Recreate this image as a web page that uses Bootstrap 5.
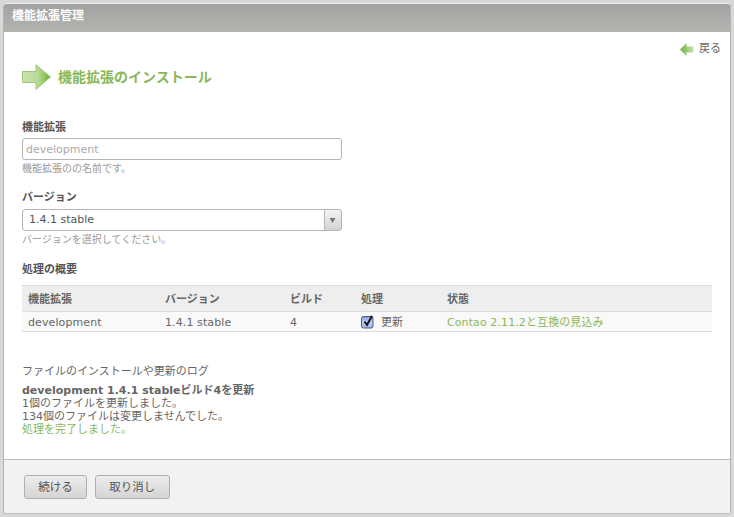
<!DOCTYPE html>
<html lang="ja"><head><meta charset="utf-8"><title>機能拡張管理</title>
<link href="https://cdn.jsdelivr.net/npm/bootstrap@5.3.0/dist/css/bootstrap.min.css" rel="stylesheet">
<style>
html,body{height:517px;overflow:hidden}
body{background:#d8d8d8;font:11px/13px "DejaVu Sans","Noto Sans CJK JP",sans-serif;color:#666;padding:4px 4px 4px 4px}
.xpanel{height:509px;border:0;border-radius:3px 3px 0 0;background:#fff;box-shadow:-1px 0 0 #b5b5b5,1px 0 0 #b5b5b5,0 -1px 0 #eee,0 1px 1px #bbb;margin:0}
.xhead{height:28px;padding:0 8px;border:0;border-radius:3px 3px 0 0!important;background:linear-gradient(#a2a3a1,#b3b5b1);color:#fff;font-weight:700;line-height:25px;font-size:12px}
.xbody{padding:10px 18px 0;flex:1 1 auto}
.xback{height:14px;line-height:14px;margin-right:-9px;color:#666;gap:5px}
.xtitle{font-size:14px;line-height:26px;font-weight:700;color:#8ab858;margin:8px 0 0;gap:7px;height:26px}
.xlabel{font-weight:700;margin:31px 0 4px;color:#555;line-height:13px}
.xinput,.xselect{width:320px;height:22px;border:1px solid #b5b5b5;border-radius:3px;padding:0 3px;font-size:11px;line-height:20px;font-family:inherit;box-shadow:none}
.xinput::placeholder{color:#aaa}
.xselect{padding:0 6px;color:#555;--bs-form-select-bg-img:none;background-color:#fff;background-image:url("data:image/svg+xml,%3Csvg xmlns='http://www.w3.org/2000/svg' width='17' height='20'%3E%3Cdefs%3E%3ClinearGradient id='g' x2='0' y2='1'%3E%3Cstop stop-color='%23f4f4f4'/%3E%3Cstop offset='1' stop-color='%23d2d2d2'/%3E%3C/linearGradient%3E%3C/defs%3E%3Crect width='17' height='20' fill='url(%23g)'/%3E%3Crect width='1' height='20' fill='%23b5b5b5'/%3E%3Cpath d='M5.5 8h6l-3 5z' fill='%23777'/%3E%3C/svg%3E");background-position:right center;background-size:17px 20px;background-repeat:no-repeat}
.xhint{color:#999;font-size:10px;line-height:13px;margin-top:2px}
.xl2{margin-top:16px;margin-bottom:5px}
.xl3{margin-top:17px;margin-bottom:0}
.xtable{width:690px;margin:9px 0 0;font-size:11px;table-layout:fixed;--bs-table-bg:transparent;--bs-table-color:#666;border-collapse:separate;border-spacing:0}
.xtable th{background:#eee;height:27px;padding:1px 6px 0;font-weight:700;border-top:1px solid #ddd;border-bottom:1px solid #ddd;vertical-align:middle;color:#666}
.xtable td{background:#f9f9f9;height:20px;padding:1px 6px 0;border-bottom:1px solid #ddd;vertical-align:middle;letter-spacing:.1px}
.xok{color:#8ab858}
.xlog{margin-top:33px;line-height:13px}
.xlog p{margin:0 0 6px}
.xfoot{height:54px;background:#f2f2f2;border:0;border-top:1px solid #bbb;border-radius:0!important;padding:15px 20px;gap:8px;margin-top:auto}
.xbtn{height:24px;padding:0 13.25px;font-size:11.5px;line-height:22px;color:#555;border:1px solid #b0b0b0;border-radius:3px;background:linear-gradient(#ededed,#d4d4d4);font-family:inherit}
.xcw{width:14px;height:14px}
.xgap{gap:6px}
</style></head><body>
<div class="card xpanel d-flex flex-column">
 <div class="card-header xhead">機能拡張管理</div>
 <div class="card-body xbody">
  <div class="d-flex justify-content-end"><span class="d-flex align-items-center xback">
   <svg width="14" height="13" viewBox="0 0 14 13"><defs><linearGradient id="b" x1="0" x2="1"><stop stop-color="#6db43c"/><stop offset="1" stop-color="#c6e2ac"/></linearGradient></defs><path d="M0 6.5 6.500 0v3.500H13.500v6H6.500V13z" fill="url(#b)"/></svg>戻る</span></div>
  <h1 class="d-flex align-items-center xtitle">
   <svg width="29" height="26" viewBox="0 0 29 26"><defs><linearGradient id="a" x1="0" x2="1"><stop stop-color="#c9e4b0"/><stop offset=".55" stop-color="#b8da98"/><stop offset="1" stop-color="#6cb02f"/></linearGradient></defs><path d="M.500 7.500h13.500V.800L28.500 13 14 25.200V18.500H.500z" fill="url(#a)" stroke="#9cc878"/></svg>機能拡張のインストール</h1>
  <div class="xlabel">機能拡張</div>
  <input class="form-control xinput" placeholder="development">
  <div class="xhint">機能拡張のの名前です。</div>
  <div class="xlabel xl2">バージョン</div>
  <select class="form-select xselect"><option>1.4.1 stable</option></select>
  <div class="xhint">バージョンを選択してください。</div>
  <div class="xlabel xl3">処理の概要</div>
  <table class="table xtable">
   <colgroup><col style="width:137px"><col style="width:125px"><col style="width:71px"><col style="width:86px"><col></colgroup>
   <thead><tr><th>機能拡張</th><th>バージョン</th><th>ビルド</th><th>処理</th><th>状態</th></tr></thead>
   <tbody><tr><td>development</td><td>1.4.1 stable</td><td>4</td>
    <td><span class="d-flex align-items-center xgap"><svg class="xcw" viewBox="0 0 14 14"><defs><linearGradient id="c" x2="0" y2="1"><stop stop-color="#7f9fe0"/><stop offset=".5" stop-color="#c0d2f2"/><stop offset="1" stop-color="#98b4ea"/></linearGradient></defs><rect x=".5" y="1.500" width="11.500" height="11.500" rx="2" fill="url(#c)" stroke="#4a5a80"/><path d="M3.500 6.500 6 10 11 1" fill="none" stroke="#111" stroke-width="2"/></svg>更新</span></td>
    <td class="xok">Contao 2.11.2と互換の見込み</td></tr></tbody>
  </table>
  <div class="xlog">
   <p>ファイルのインストールや更新のログ</p>
   <div><b>development 1.4.1 stableビルド4を更新</b></div>
   <div>1個のファイルを更新しました。</div>
   <div>134個のファイルは変更しませんでした。</div>
   <div class="xok">処理を完了しました。</div>
  </div>
 </div>
 <div class="card-footer d-flex xfoot">
  <button type="button" class="btn xbtn">続ける</button>
  <button type="button" class="btn xbtn">取り消し</button>
 </div>
</div>
<script src="https://cdn.jsdelivr.net/npm/bootstrap@5.3.0/dist/js/bootstrap.bundle.min.js"></script>
</body></html>
